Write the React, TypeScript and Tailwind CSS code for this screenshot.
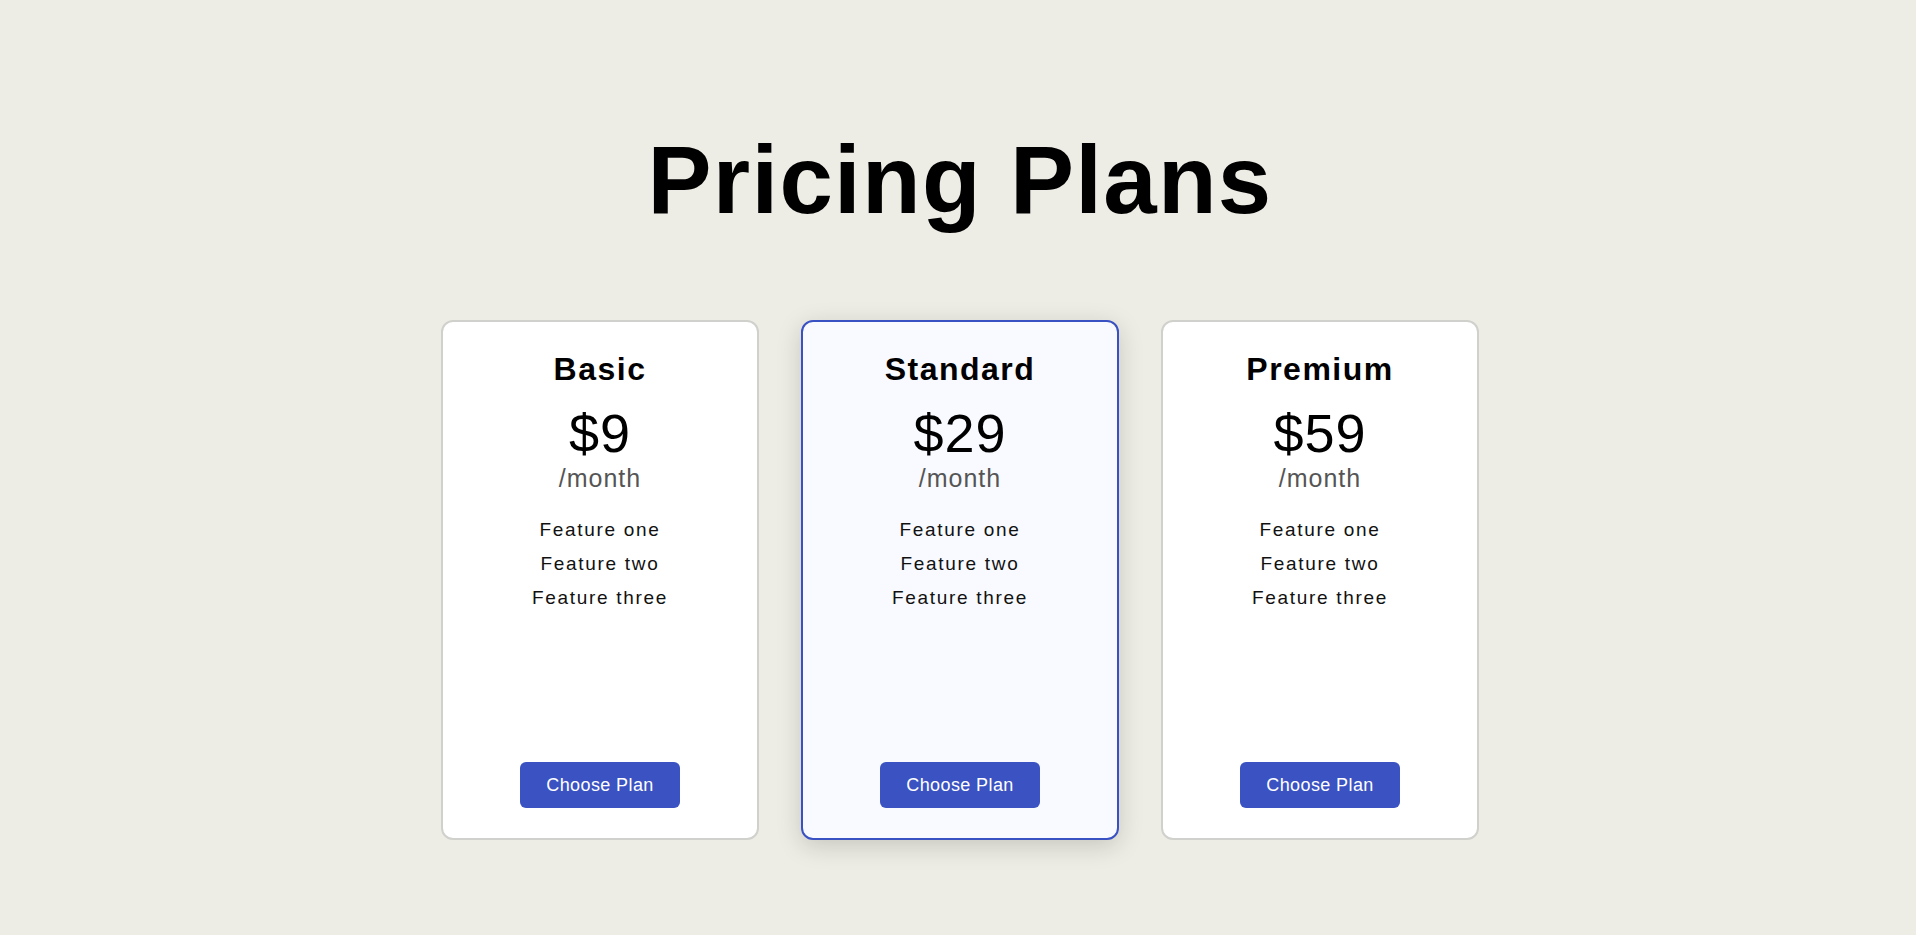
import React from 'react';

interface Plan {
  name: string;
  price: string;
  features: string[];
  featured?: boolean;
}

const plans: Plan[] = [
  { name: 'Basic', price: '$9', features: ['Feature one', 'Feature two', 'Feature three'] },
  { name: 'Standard', price: '$29', features: ['Feature one', 'Feature two', 'Feature three'], featured: true },
  { name: 'Premium', price: '$59', features: ['Feature one', 'Feature two', 'Feature three'] },
];

const PlanCard: React.FC<{ plan: Plan }> = ({ plan }) => {
  const base = 'w-[318px] h-[520px] rounded-[12px] border-2 px-6 pt-[28px] pb-[30px] flex flex-col items-center text-center';
  const look = plan.featured
    ? 'border-[#3a51c4] bg-[#f8faff] shadow-[0_6px_24px_rgba(0,0,0,0.17)]'
    : 'border-[#d0d0cc] bg-white';

  return (
    <div className={`${base} ${look}`}>
      <h2 className="text-[32px] leading-[38px] font-bold tracking-[1.5px] text-black">{plan.name}</h2>
      <div className="mt-[15px] text-[54px] leading-[60px] tracking-[1px] text-black">{plan.price}</div>
      <div className="text-[25px] leading-[30px] tracking-[1px] text-[#555]">/month</div>
      <ul className="mt-5">
        {plan.features.map((f) => (
          <li key={f} className="text-[19px] leading-[34px] tracking-[1.7px] text-[#111]">
            {f}
          </li>
        ))}
      </ul>
      <button className="mt-auto w-[160px] h-[46px] rounded-[6px] bg-[#3a52c2] text-white text-[18px] tracking-[0.4px]">
        Choose Plan
      </button>
    </div>
  );
};

export default function App() {
  return (
    <div
      className="min-h-screen bg-[#eeede5] pl-1 pt-[132px] flex flex-col items-center"
      style={{ fontFamily: '"Liberation Sans", Arial, sans-serif' }}
    >
      <h1 className="text-[96px] leading-none font-bold tracking-[1.3px] text-black">Pricing Plans</h1>
      <div className="mt-[92px] flex gap-[42px]">
        {plans.map((p) => (
          <PlanCard key={p.name} plan={p} />
        ))}
      </div>
    </div>
  );
}
